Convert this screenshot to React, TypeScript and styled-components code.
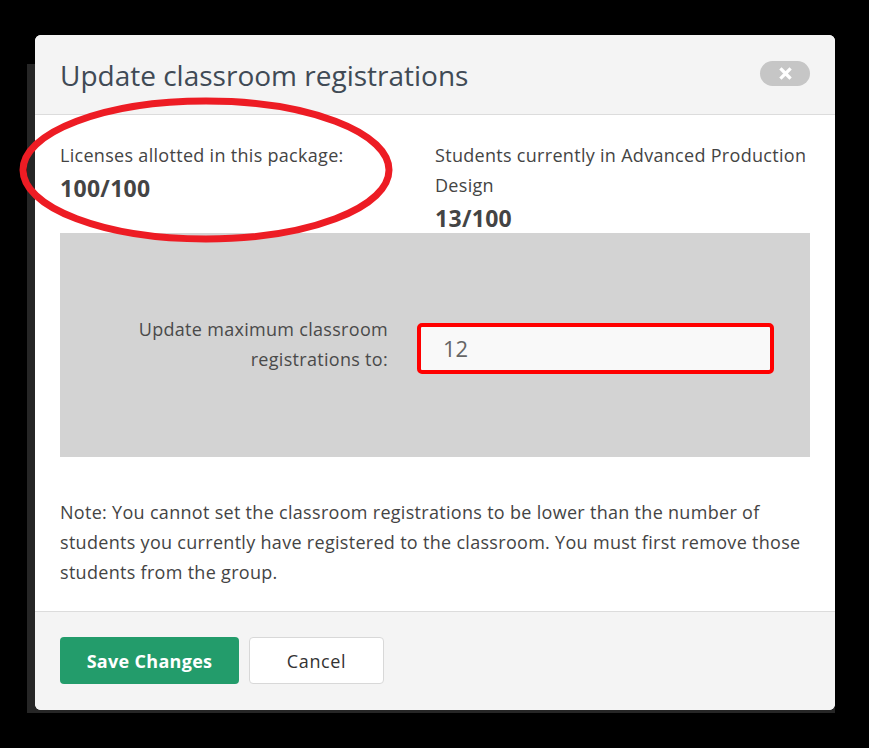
import React, { useState } from 'react';
import styled, { createGlobalStyle } from 'styled-components';

const GlobalStyle = createGlobalStyle`
  html, body {
    margin: 0;
    padding: 0;
    background: #000;
  }
  body {
    font-family: 'Open Sans', 'Liberation Sans', sans-serif;
    color: #444;
  }
`;

const App: React.FC = () => {
  const [limit, setLimit] = useState('12');

  return (
    <>
      <GlobalStyle />
      <Screen>
        <Backdrop />
        <Modal>
          <Header>
            <Title>Update classroom registrations</Title>
            <CloseButton aria-label="Close">
              <svg width="13" height="13" viewBox="0 0 13 13">
                <path d="M2.5 2.5 L10.5 10.5 M10.5 2.5 L2.5 10.5" stroke="#fff" strokeWidth="3.2" strokeLinecap="square" />
              </svg>
            </CloseButton>
          </Header>

          <Body>
            <Stats>
              <Stat>
                <StatLabel>Licenses allotted in this package:</StatLabel>
                <StatValue>100/100</StatValue>
              </Stat>
              <Stat>
                <StatLabel>Students currently in Advanced Production Design</StatLabel>
                <StatValue>13/100</StatValue>
              </Stat>
            </Stats>

            <FormPanel>
              <FieldLabel htmlFor="max-reg">
                Update maximum classroom registrations to:
              </FieldLabel>
              <NumberInput
                id="max-reg"
                value={limit}
                onChange={(e) => setLimit(e.target.value)}
              />
            </FormPanel>

            <Note>
              Note: You cannot set the classroom registrations to be lower than the number of
              students you currently have registered to the classroom. You must first remove those
              students from the group.
            </Note>
          </Body>

          <Footer>
            <PrimaryButton>Save Changes</PrimaryButton>
            <SecondaryButton>Cancel</SecondaryButton>
          </Footer>

          {/* hand-drawn annotation */}
          <Annotation width="390" height="160" viewBox="0 0 390 160">
            <ellipse cx="191" cy="77" rx="183" ry="69" fill="none" stroke="#ed1c24" strokeWidth="7" />
          </Annotation>
        </Modal>
      </Screen>
    </>
  );
};

export default App;

// Styled Components
const Screen = styled.div`
  position: relative;
  width: 869px;
  height: 748px;
  background: #000;
  overflow: hidden;
`;

const Backdrop = styled.div`
  position: absolute;
  left: 27px;
  top: 64px;
  width: 808px;
  height: 649px;
  background: #262626;
`;

const Modal = styled.div`
  position: absolute;
  left: 35px;
  top: 35px;
  width: 800px;
  display: flex;
  flex-direction: column;
  background: #fff;
  border-radius: 6px;
`;

const Header = styled.div`
  display: flex;
  align-items: center;
  justify-content: space-between;
  height: 80px;
  box-sizing: border-box;
  padding: 0 25px;
  background: #f4f4f4;
  border-bottom: 1px solid #dcdcdc;
  border-radius: 6px 6px 0 0;
`;

const Title = styled.h2`
  margin: 0;
  font-size: 28px;
  font-weight: 400;
  color: #404a55;
`;

const CloseButton = styled.button`
  display: flex;
  align-items: center;
  justify-content: center;
  width: 50px;
  height: 25px;
  border: none;
  border-radius: 13px;
  background: #c6c6c6;
  padding: 0;
  margin-top: -2px;
`;

const Body = styled.div`
  display: flex;
  flex-direction: column;
  padding: 25px 25px 24px;
`;

const Stats = styled.div`
  display: grid;
  grid-template-columns: 375px 375px;
`;

const Stat = styled.div`
  display: flex;
  flex-direction: column;
`;

const StatLabel = styled.div`
  font-size: 18px;
  letter-spacing: 0.3px;
  line-height: 30px;
  color: #444;
`;

const StatValue = styled.div`
  font-size: 23px;
  font-weight: 700;
  letter-spacing: 0.3px;
  line-height: 30px;
  color: #444;
  margin-top: 3px;
`;

const FormPanel = styled.div`
  display: flex;
  align-items: center;
  height: 224px;
  background: #d3d3d3;
`;

const FieldLabel = styled.label`
  width: 328px;
  margin-right: 29px;
  text-align: right;
  font-size: 18px;
  letter-spacing: 0.3px;
  line-height: 30px;
  color: #4a4a4a;
  margin-top: -2px;
`;

const NumberInput = styled.input`
  box-sizing: border-box;
  width: 357px;
  height: 51px;
  margin-top: 6px;
  padding: 0 22px;
  border: 4px solid #ff0000;
  border-radius: 5px;
  background: #f9f9f9;
  font-family: 'Open Sans', 'Liberation Sans', sans-serif;
  font-size: 22px;
  color: #666;
  outline: none;
`;

const Note = styled.p`
  margin: 40px 0 0;
  font-size: 18px;
  letter-spacing: 0.3px;
  line-height: 30px;
  color: #444;
`;

const Footer = styled.div`
  display: flex;
  gap: 10px;
  padding: 25px 25px 26px;
  background: #f4f4f4;
  border-top: 1px solid #dcdcdc;
  border-radius: 0 0 6px 6px;
`;

const BaseButton = styled.button`
  height: 47px;
  box-sizing: border-box;
  border-radius: 4px;
  font-family: 'Open Sans', 'Liberation Sans', sans-serif;
  font-size: 18px;
  cursor: pointer;
`;

const PrimaryButton = styled(BaseButton)`
  width: 179px;
  border: none;
  background: #239c6b;
  color: #fff;
  font-weight: 700;
  letter-spacing: 0.3px;
`;

const SecondaryButton = styled(BaseButton)`
  width: 135px;
  border: 1px solid #d8d8d8;
  background: #fff;
  color: #333;
  letter-spacing: 0.6px;
`;

const Annotation = styled.svg`
  position: absolute;
  left: -20px;
  top: 58px;
  pointer-events: none;
`;
